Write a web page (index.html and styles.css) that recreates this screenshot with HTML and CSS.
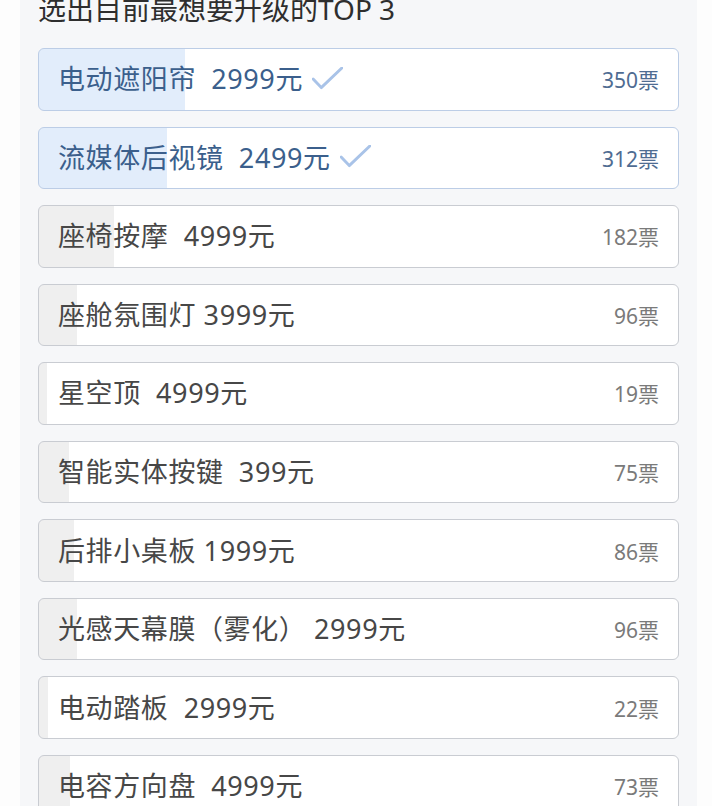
FILE: index.html
```html
<!DOCTYPE html>
<html lang="zh-CN">
<head>
<meta charset="utf-8">
<link rel="stylesheet" href="styles.css">
</head>
<body>
<div class="card">
  <div class="title">选出目前最想要升级的TOP 3</div>
  <ul class="list">
    <li class="opt sel" style="--p:22.8%"><span class="name">电动遮阳帘  2999元</span><svg class="check" viewBox="0 0 32 24"><path d="M1 12.5 L9.5 21.5 L31 1"/></svg><span class="votes">350票</span></li>
    <li class="opt sel" style="--p:20%"><span class="name">流媒体后视镜  2499元</span><svg class="check" viewBox="0 0 32 24"><path d="M1 12.5 L9.5 21.5 L31 1"/></svg><span class="votes">312票</span></li>
    <li class="opt" style="--p:11.7%"><span class="name">座椅按摩  4999元</span><span class="votes">182票</span></li>
    <li class="opt" style="--p:5.9%"><span class="name">座舱氛围灯 3999元</span><span class="votes">96票</span></li>
    <li class="opt" style="--p:1.2%"><span class="name">星空顶  4999元</span><span class="votes">19票</span></li>
    <li class="opt" style="--p:4.7%"><span class="name">智能实体按键  399元</span><span class="votes">75票</span></li>
    <li class="opt" style="--p:5.5%"><span class="name">后排小桌板 1999元</span><span class="votes">86票</span></li>
    <li class="opt" style="--p:5.9%"><span class="name">光感天幕膜（雾化） 2999元</span><span class="votes">96票</span></li>
    <li class="opt" style="--p:1.4%"><span class="name">电动踏板  2999元</span><span class="votes">22票</span></li>
    <li class="opt" style="--p:4.8%"><span class="name">电容方向盘  4999元</span><span class="votes">73票</span></li>
  </ul>
</div>
</body>
</html>
```
FILE: styles.css
```css
html, body {
  margin: 0;
  padding: 0;
  background: #fdfdfd;
  overflow: hidden;
}
body {
  font-family: "Noto Sans", "Noto Sans CJK SC", sans-serif;
  height: 806px;
}
.card {
  margin-left: 20px;
  width: 677px;
  height: 900px;
  background: #f6f7f9;
  padding: 0 18px;
  box-sizing: border-box;
}
.title {
  font-size: 28px;
  line-height: 32px;
  color: #2e2e2e;
  margin-top: -7px;
  height: 32px;
  margin-bottom: 23px;
  white-space: nowrap;
}
.list {
  list-style: none;
  margin: 0;
  padding: 0;
  display: flex;
  flex-direction: column;
  gap: 16px;
}
.opt {
  height: 62.56px;
  box-sizing: border-box;
  border: 1px solid #c9ccd2;
  border-radius: 6px;
  background: linear-gradient(to right, #efefef var(--p), #ffffff var(--p));
  display: flex;
  align-items: center;
  padding: 0 19px 0 19px;
}
.opt.sel {
  border-color: #bccde6;
  background: linear-gradient(to right, #e2edfb var(--p), #ffffff var(--p));
}
.name {
  font-size: 27px;
  line-height: 36px;
  color: #474747;
  white-space: pre;
  letter-spacing: 0.6px;
}
.sel .name {
  color: #3b5f8c;
}
.check {
  width: 31px;
  height: 23px;
  margin-left: 9px;
  margin-top: -2px;
  fill: none;
  stroke: #a9c3e8;
  stroke-width: 3;
  stroke-linecap: round;
  stroke-linejoin: round;
}
.votes {
  margin-left: auto;
  font-size: 21px;
  color: #7a7a7a;
}
.sel .votes {
  color: #4f6c92;
}
```
